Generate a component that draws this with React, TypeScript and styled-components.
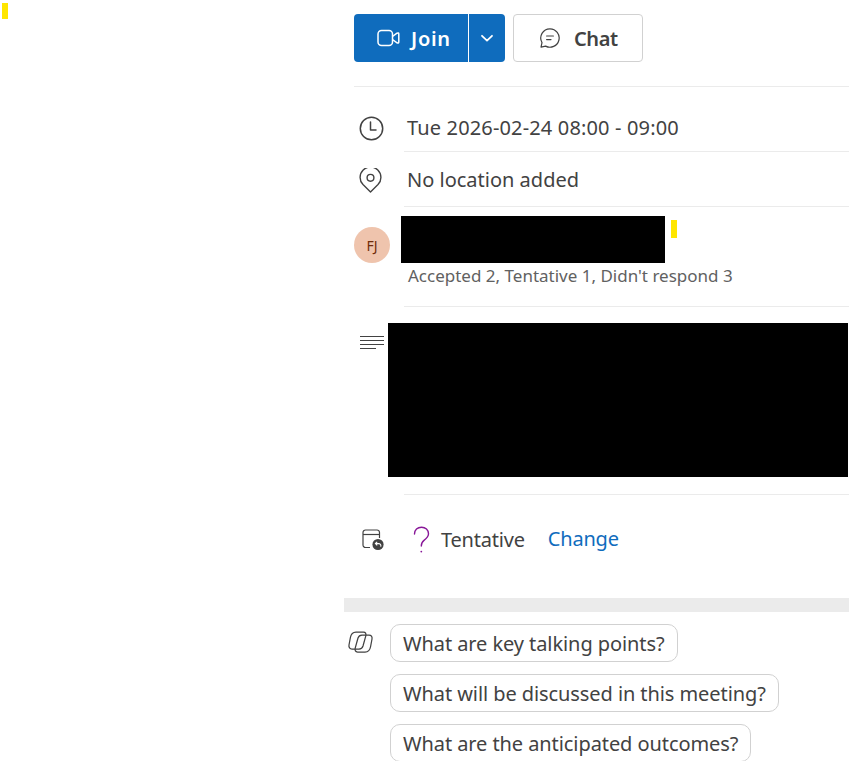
import React from "react";
import styled, { createGlobalStyle } from "styled-components";

const Global = createGlobalStyle`
  html, body { margin: 0; padding: 0; background: #fff; height: 761px; overflow: hidden; }
  body { font-family: "Noto Sans", "Open Sans", sans-serif; color: #424242; }
`;

const Page = styled.div`
  display: flex;
  width: 849px;
  height: 761px;
  overflow: hidden;
`;

const Gutter = styled.div`
  width: 344px;
  flex: none;
  padding: 3px 0 0 2px;
  box-sizing: border-box;
`;

const Marker = styled.div<{ $h: number }>`
  width: 5.5px;
  height: ${(p) => p.$h}px;
  background: #ffe600;
`;

const Panel = styled.main`
  flex: 1;
  min-width: 0;
`;

const Upper = styled.div`
  padding: 14px 0 0 10px;
  height: 598px;
  box-sizing: border-box;
`;

const Actions = styled.div`
  display: flex;
  gap: 8px;
  height: 48px;
  margin-bottom: 24px;
`;

const JoinGroup = styled.div`
  display: flex;
  width: 151px;
  background: #0f6cbd;
  border-radius: 4px;
  color: #fff;
`;

const JoinMain = styled.button`
  all: unset;
  width: 115px;
  padding-left: 23px;
  box-sizing: border-box;
  display: flex;
  align-items: center;
  gap: 11px;
  border-right: 1px solid #fff;
  font-size: 20px;
  font-weight: 600;
  letter-spacing: 0.7px;
`;

const JoinCaret = styled.button`
  all: unset;
  flex: 1;
  display: flex;
  align-items: center;
  justify-content: center;
`;

const ChatButton = styled.button`
  all: unset;
  width: 130px;
  box-sizing: border-box;
  padding-left: 26px;
  border: 1px solid #d1d1d1;
  border-radius: 4px;
  display: flex;
  align-items: center;
  gap: 14px;
  font-size: 20px;
  font-weight: 600;
  letter-spacing: -0.4px;
  color: #424242;
`;

const Rule = styled.div<{ $inset?: number }>`
  height: 1px;
  background: #ebebeb;
  margin-left: ${(p) => p.$inset ?? 0}px;
`;

const InfoRow = styled.div<{ $h: number; $top: number }>`
  display: flex;
  align-items: center;
  height: ${(p) => p.$h}px;
  padding-top: ${(p) => p.$top}px;
  box-sizing: border-box;
`;

const IconSlot = styled.div`
  width: 53px;
  flex: none;
  display: flex;
  padding-left: 5px;
  box-sizing: border-box;
`;

const InfoText = styled.div<{ $spacing?: number }>`
  font-size: 20px;
  line-height: 28px;
  color: #424242;
  letter-spacing: ${(p) => p.$spacing ?? 0}px;
`;

const Attendees = styled.div`
  display: flex;
  height: 99px;
  padding-top: 9px;
  box-sizing: border-box;
`;

const Avatar = styled.div`
  width: 36px;
  height: 36px;
  margin-top: 11px;
  border-radius: 50%;
  background: #efc4ad;
  color: #712d09;
  font-size: 14px;
  display: flex;
  align-items: center;
  justify-content: center;
  flex: none;
`;

const AttendeeText = styled.div`
  margin-left: 11px;
`;

const NameRow = styled.div`
  display: flex;
  gap: 6px;
  align-items: flex-start;
`;

const Redacted = styled.div<{ $w: number; $h: number }>`
  width: ${(p) => p.$w}px;
  height: ${(p) => p.$h}px;
  background: #000;
  flex: none;
`;

const NameMarker = styled(Marker)`
  margin-top: 4px;
`;

const Summary = styled.div`
  font-size: 17px;
  line-height: 24px;
  color: #616161;
  margin: 1px 0 0 7px;
`;

const Body = styled.div`
  display: flex;
  height: 187px;
  padding-top: 16px;
  box-sizing: border-box;
`;

const BodyIcon = styled.div`
  width: 34px;
  padding: 11px 0 0 6px;
  box-sizing: border-box;
  flex: none;
`;

const ResponseRow = styled.div`
  display: flex;
  align-items: center;
  height: 90px;
`;

const ResponseIcon = styled.div`
  width: 59px;
  flex: none;
  display: flex;
  align-items: center;
  padding-left: 8px;
  box-sizing: border-box;
`;

const TentativeSlot = styled.div`
  width: 28px;
  flex: none;
  display: flex;
`;

const ChangeLink = styled.a`
  color: #0f6cbd;
  font-size: 20px;
  line-height: 28px;
  margin: 0 0 2px 23px;
  letter-spacing: -0.2px;
`;

const Band = styled.div`
  height: 14px;
  background: #ebebeb;
`;

const Suggestions = styled.section`
  display: flex;
  padding: 12px 0 0 4px;
`;

const CopilotSlot = styled.div`
  width: 42px;
  flex: none;
  padding-top: 7px;
`;

const Pills = styled.div`
  display: flex;
  flex-direction: column;
  align-items: flex-start;
  gap: 12px;
`;

const Pill = styled.button`
  all: unset;
  height: 38px;
  box-sizing: border-box;
  padding: 2px 12px 0;
  border: 1px solid #d1d1d1;
  border-radius: 10px;
  font-size: 20px;
  line-height: 34px;
  letter-spacing: -0.08px;
  color: #424242;
  white-space: nowrap;
`;

const VideoIcon = () => (
  <svg width="23" height="24" viewBox="0 0 23 24" fill="none" stroke="currentColor" strokeWidth="1.5">
    <rect x="1" y="4.5" width="14.5" height="15" rx="3.5" />
    <path d="M15.5 10.5 L20 7.2 Q21.8 6.4 21.8 8 V16 Q21.8 17.6 20 16.8 L15.5 13.5" strokeLinejoin="round" />
  </svg>
);

const CaretIcon = () => (
  <svg width="14" height="14" viewBox="0 0 14 14" fill="none" stroke="currentColor" strokeWidth="1.8" strokeLinecap="round" strokeLinejoin="round">
    <path d="M2 4.8 L7 9.6 L12 4.8" />
  </svg>
);

const ChatIcon = () => (
  <svg width="20" height="20" viewBox="0 0 20 20" fill="none" stroke="#424242" strokeWidth="1.2" strokeLinecap="round" strokeLinejoin="round">
    <path d="M10 .8 a9.2 9.2 0 1 1 -4.4 17.3 L1 19.2 L2 14.6 A9.2 9.2 0 0 1 10 .8 Z" />
    <path d="M6.6 8 H13.4 M6.6 11.6 H11" />
  </svg>
);

const ClockIcon = () => (
  <svg width="25" height="25" viewBox="0 0 25 25" fill="none" stroke="#424242" strokeWidth="1.5" strokeLinecap="round" strokeLinejoin="round">
    <circle cx="12.5" cy="12.5" r="11.2" />
    <path d="M11.5 6 V14 H17" />
  </svg>
);

const PinIcon = () => (
  <svg width="23" height="25" viewBox="0 0 23 25" fill="none" stroke="#424242" strokeWidth="1.4" strokeLinejoin="round">
    <path d="M11.5 24 L4 16.6 A10.4 10.4 0 1 1 19 16.6 Z" />
    <circle cx="11.5" cy="9.8" r="3.4" />
  </svg>
);

const LinesIcon = () => (
  <svg width="25" height="16" viewBox="0 0 25 16" fill="none" stroke="#424242" strokeWidth="1">
    <path d="M0 1.5 H24 M0 5.5 H24 M0 9.5 H24 M0 13.5 H16" />
  </svg>
);

const CalendarReplyIcon = () => (
  <svg width="23" height="22" viewBox="0 0 23 22" fill="none">
    <path d="M8 18.5 H3.5 A2.5 2.5 0 0 1 1 16 V3.5 A2.5 2.5 0 0 1 3.5 1 H15 A2.5 2.5 0 0 1 17.5 3.5 V9" stroke="#424242" strokeWidth="1.2" />
    <path d="M1 5.5 H17.5" stroke="#424242" strokeWidth="1.2" />
    <circle cx="16" cy="15.5" r="5.6" fill="#424242" />
    <path d="M13.4 14.6 H17 A2 2 0 0 1 18.6 17.6 M15.2 12.8 L13.4 14.6 L15.2 16.4" stroke="#fff" strokeWidth="1.1" fill="none" />
  </svg>
);

const TentativeIcon = () => (
  <svg width="17" height="28" viewBox="0 0 17 28" fill="none" stroke="#881798" strokeWidth="1.4" strokeLinecap="round">
    <path d="M1.5 8 C1.5 4 4.5 1.2 8.5 1.2 C12.5 1.2 15.5 4 15.5 7.8 C15.5 11 13.4 12.6 11 14.4 C9 15.9 8.3 17.2 8.3 20" />
    <circle cx="8.3" cy="25.6" r="0.9" fill="#881798" stroke="none" />
  </svg>
);

const CopilotIcon = () => (
  <svg width="25" height="22" viewBox="0 0 25 22" fill="none" stroke="#424242" strokeWidth="1.25" strokeLinejoin="round">
    <path d="M8 1 H15.5 C17.5 1 18.3 2.8 17.8 4.8 L15 15 C14.4 17 13 18 11 18 H4 C1.8 18 .6 16.2 1 14 L2.4 6.5 C3 3 5 1 8 1 Z" />
    <path d="M17 21 H9.5 C7.5 21 6.7 19.2 7.2 17.2 L10 7 C10.6 5 12 4 14 4 H21 C23.2 4 24.4 5.8 24 8 L22.6 15.5 C22 19 20 21 17 21 Z" />
  </svg>
);

export default function App() {
  return (
    <Page>
      <Global />
      <Gutter>
        <Marker $h={16} />
      </Gutter>
      <Panel>
        <Upper>
          <Actions>
            <JoinGroup>
              <JoinMain>
                <VideoIcon />
                Join
              </JoinMain>
              <JoinCaret aria-label="More join options">
                <CaretIcon />
              </JoinCaret>
            </JoinGroup>
            <ChatButton>
              <ChatIcon />
              Chat
            </ChatButton>
          </Actions>
          <Rule />
          <InfoRow $h={64} $top={18}>
            <IconSlot>
              <ClockIcon />
            </IconSlot>
            <InfoText $spacing={0.15}>Tue 2026-02-24 08:00 - 09:00</InfoText>
          </InfoRow>
          <Rule $inset={50} />
          <InfoRow $h={54} $top={2}>
            <IconSlot>
              <PinIcon />
            </IconSlot>
            <InfoText>No location added</InfoText>
          </InfoRow>
          <Rule $inset={50} />
          <Attendees>
            <Avatar>FJ</Avatar>
            <AttendeeText>
              <NameRow>
                <Redacted $w={264} $h={47} />
                <NameMarker $h={18} />
              </NameRow>
              <Summary>Accepted 2, Tentative 1, Didn't respond 3</Summary>
            </AttendeeText>
          </Attendees>
          <Rule $inset={50} />
          <Body>
            <BodyIcon>
              <LinesIcon />
            </BodyIcon>
            <Redacted $w={460} $h={154} />
          </Body>
          <Rule $inset={50} />
          <ResponseRow>
            <ResponseIcon>
              <CalendarReplyIcon />
            </ResponseIcon>
            <TentativeSlot>
              <TentativeIcon />
            </TentativeSlot>
            <InfoText $spacing={-0.2}>Tentative</InfoText>
            <ChangeLink>Change</ChangeLink>
          </ResponseRow>
        </Upper>
        <Band />
        <Suggestions>
          <CopilotSlot>
            <CopilotIcon />
          </CopilotSlot>
          <Pills>
            <Pill>What are key talking points?</Pill>
            <Pill>What will be discussed in this meeting?</Pill>
            <Pill>What are the anticipated outcomes?</Pill>
          </Pills>
        </Suggestions>
      </Panel>
    </Page>
  );
}
